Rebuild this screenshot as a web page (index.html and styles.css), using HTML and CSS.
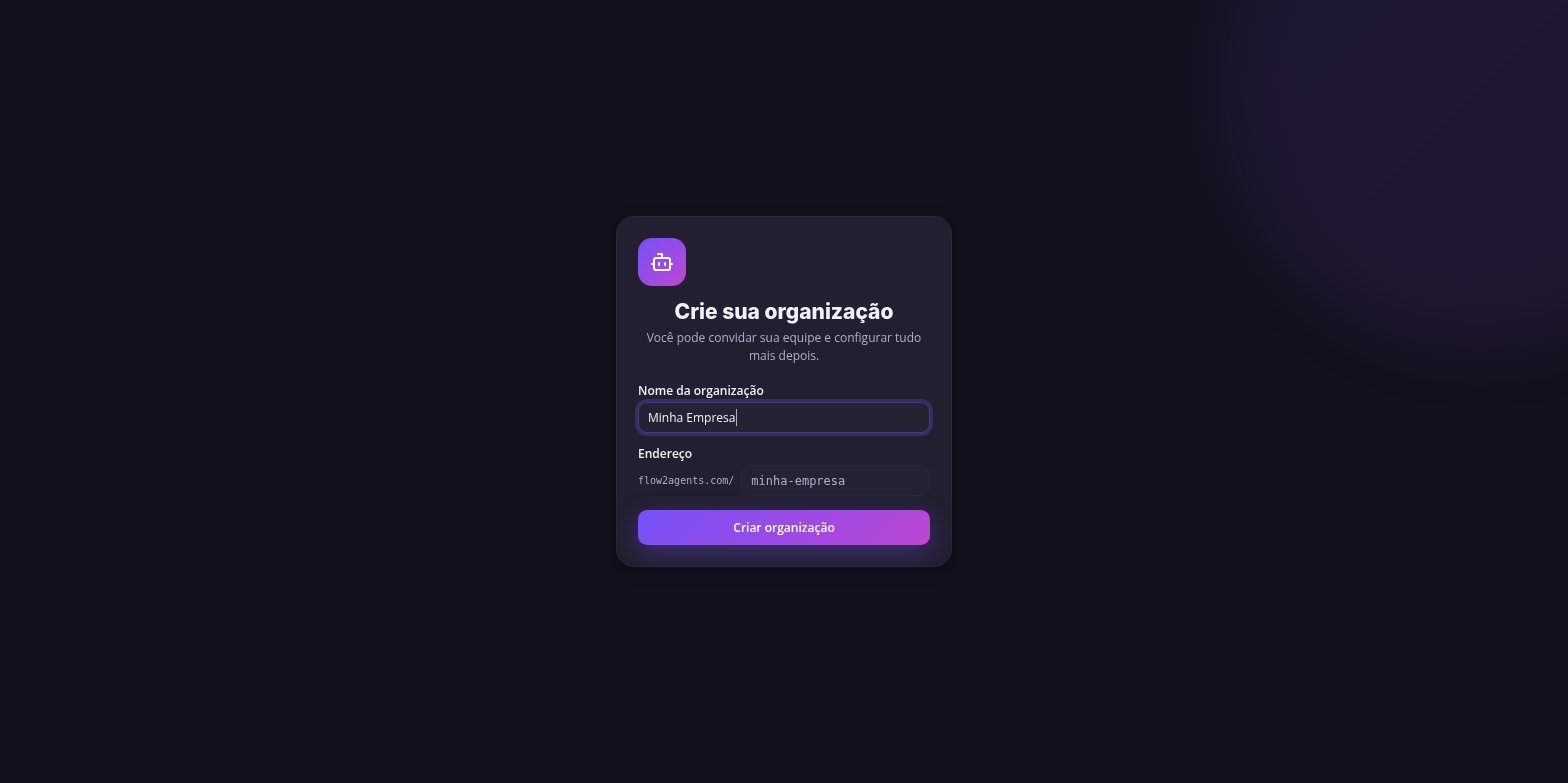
FILE: index.html
```html
<!DOCTYPE html>
<html lang="pt-BR">
<head>
    <meta charset="UTF-8">
    <meta name="viewport" content="width=device-width, initial-scale=1.0">
    <title>Crie sua organização</title>
    <link rel="stylesheet" href="styles.css">
</head>
<body>
    <div class="backdrop">
        <div class="glow"></div>
    </div>

    <main class="page">
        <section class="card">
            <div class="logo">
                <svg viewBox="0 0 24 24" width="24" height="24" fill="none" stroke="currentColor" stroke-width="2" stroke-linecap="round" stroke-linejoin="round" aria-hidden="true">
                    <path d="M12 8V4H8"/>
                    <rect width="16" height="12" x="4" y="8" rx="2"/>
                    <path d="M2 14h2"/>
                    <path d="M20 14h2"/>
                    <path d="M15 13v2"/>
                    <path d="M9 13v2"/>
                </svg>
            </div>

            <header class="intro">
                <h1>Crie sua organização</h1>
                <p>Você pode convidar sua equipe e configurar tudo mais depois.</p>
            </header>

            <form class="form">
                <div class="field">
                    <label for="name">Nome da organização</label>
                    <div class="control">
                        <input id="name" class="input" type="text" value="Minha Empresa" autofocus>
                        <span class="caret"></span>
                    </div>
                </div>
                <div class="field">
                    <label for="slug">Endereço</label>
                    <div class="slug-row">
                        <span class="prefix">flow2agents.com/</span>
                        <input id="slug" class="input mono" type="text" placeholder="minha-empresa">
                    </div>
                </div>
                <button type="submit" class="submit">Criar organização</button>
            </form>
        </section>
    </main>

    <script>
        const nameInput = document.getElementById('name');
        const caret = document.querySelector('.caret');

        nameInput.focus();
        nameInput.addEventListener('input', () => {
            // back to the native caret once the user types
            caret.remove();
            nameInput.style.caretColor = 'auto';
        });
    </script>
</body>
</html>
```

FILE: styles.css
```css
:root {
    --background: #12111d;
    --card: #221f30;
    --field: #252233;
    --border: #2a2738;
    --text: #f1effa;
    --muted: #b2acca;
    --violet: #7651f8;
    --pink: #bd46d3;
    --gradient: linear-gradient(135deg, var(--violet), var(--pink));
}

* {
    margin: 0;
    padding: 0;
    box-sizing: border-box;
}

body {
    min-height: 100vh;
    background-color: var(--background);
    color: var(--text);
    font-family: 'Open Sans', 'Noto Sans', sans-serif;
    font-size: 12px;
    line-height: 18px;
}

.backdrop {
    position: fixed;
    inset: 0;
    overflow: hidden;
}

.glow {
    position: absolute;
    top: -175px;
    right: -175px;
    width: 525px;
    height: 525px;
    border-radius: 50%;
    background: var(--gradient);
    opacity: 0.1;
    filter: blur(35px);
}

.page {
    position: relative;
    display: flex;
    align-items: center;
    justify-content: center;
    min-height: 100vh;
    padding: 16px;
}

.card {
    width: 100%;
    max-width: 336px;
    padding: 21px;
    border: 1px solid var(--border);
    border-radius: 18px;
    background-color: var(--card);
    box-shadow: 0 4px 14px rgba(0, 0, 0, 0.35);
}

.logo {
    display: flex;
    align-items: center;
    justify-content: center;
    width: 48px;
    height: 48px;
    margin-bottom: 12px;
    border-radius: 14px;
    background: var(--gradient);
    color: #fff;
}

.intro {
    margin-bottom: 17px;
    text-align: center;
}

h1 {
    margin-bottom: 3px;
    font-family: Inter, sans-serif;
    font-size: 21px;
    font-weight: 800;
    line-height: 28px;
}

.intro p {
    color: var(--muted);
}

.form {
    display: flex;
    flex-direction: column;
    gap: 14px;
}

.field {
    display: flex;
    flex-direction: column;
    gap: 2px;
}

.field + .field {
    margin-top: -2px;
}

label {
    font-weight: 600;
}

.control {
    position: relative;
    display: flex;
}

.input {
    width: 100%;
    min-width: 0;
    height: 31px;
    padding: 0 9px;
    border: 1px solid var(--border);
    border-radius: 9px;
    outline: none;
    background-color: var(--field);
    color: var(--text);
    font: inherit;
}

.input::placeholder {
    color: var(--muted);
    opacity: 1;
}

.input:focus {
    border-color: #49397f;
    box-shadow: 0 0 0 3px #372e60;
}

.control .input {
    caret-color: transparent;
}

.caret {
    position: absolute;
    top: 7px;
    left: 98px;
    width: 1px;
    height: 17px;
    background-color: var(--muted);
    pointer-events: none;
}

.slug-row {
    display: flex;
    align-items: center;
    gap: 7px;
}

.prefix,
.slug-row .mono {
    font-family: 'DejaVu Sans Mono', monospace;
}

.prefix {
    color: var(--muted);
    font-size: 10px;
}

.submit {
    height: 35px;
    border: none;
    border-radius: 9px;
    background: var(--gradient);
    box-shadow: 0 7px 24px rgba(118, 81, 248, 0.35);
    color: #fff;
    font: inherit;
    font-weight: 600;
    cursor: pointer;
}
```
